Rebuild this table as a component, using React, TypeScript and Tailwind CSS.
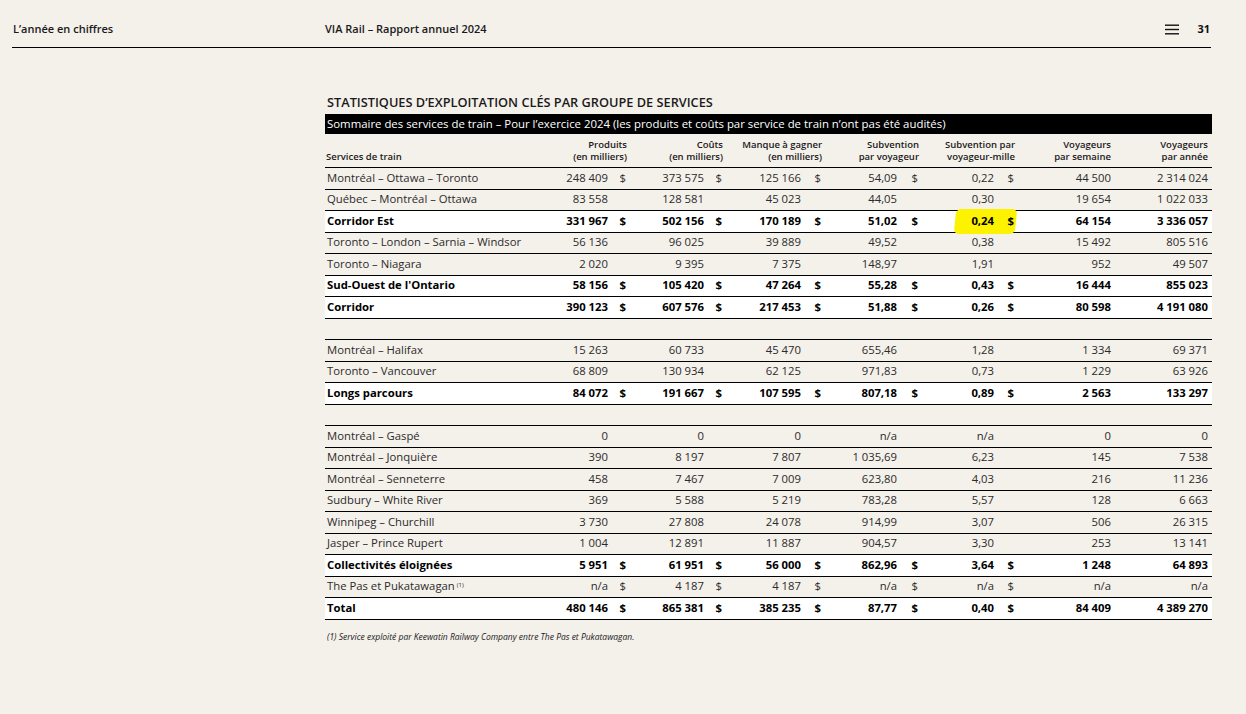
import React from 'react';

type Row = {
  label: string;
  v: string[]; // 7 values
  dollar?: boolean;
  bold?: boolean;
  note?: boolean;
  mark?: boolean;
};

const COLS =
  'grid grid-cols-[203px_80px_19px_77px_19px_78px_21px_75px_22px_75px_21px_96px_97px] pr-1';

const rows: (Row | 'gap')[] = [
  { label: 'Montréal – Ottawa – Toronto', v: ['248 409', '373 575', '125 166', '54,09', '0,22', '44 500', '2 314 024'], dollar: true },
  { label: 'Québec – Montréal – Ottawa', v: ['83 558', '128 581', '45 023', '44,05', '0,30', '19 654', '1 022 033'] },
  { label: 'Corridor Est', v: ['331 967', '502 156', '170 189', '51,02', '0,24', '64 154', '3 336 057'], dollar: true, bold: true, mark: true },
  { label: 'Toronto – London – Sarnia – Windsor', v: ['56 136', '96 025', '39 889', '49,52', '0,38', '15 492', '805 516'] },
  { label: 'Toronto – Niagara', v: ['2 020', '9 395', '7 375', '148,97', '1,91', '952', '49 507'] },
  { label: "Sud-Ouest de l'Ontario", v: ['58 156', '105 420', '47 264', '55,28', '0,43', '16 444', '855 023'], dollar: true, bold: true },
  { label: 'Corridor', v: ['390 123', '607 576', '217 453', '51,88', '0,26', '80 598', '4 191 080'], dollar: true, bold: true },
  'gap',
  { label: 'Montréal – Halifax', v: ['15 263', '60 733', '45 470', '655,46', '1,28', '1 334', '69 371'] },
  { label: 'Toronto – Vancouver', v: ['68 809', '130 934', '62 125', '971,83', '0,73', '1 229', '63 926'] },
  { label: 'Longs parcours', v: ['84 072', '191 667', '107 595', '807,18', '0,89', '2 563', '133 297'], dollar: true, bold: true },
  'gap',
  { label: 'Montréal – Gaspé', v: ['0', '0', '0', 'n/a', 'n/a', '0', '0'] },
  { label: 'Montréal – Jonquière', v: ['390', '8 197', '7 807', '1 035,69', '6,23', '145', '7 538'] },
  { label: 'Montréal – Senneterre', v: ['458', '7 467', '7 009', '623,80', '4,03', '216', '11 236'] },
  { label: 'Sudbury – White River', v: ['369', '5 588', '5 219', '783,28', '5,57', '128', '6 663'] },
  { label: 'Winnipeg – Churchill', v: ['3 730', '27 808', '24 078', '914,99', '3,07', '506', '26 315'] },
  { label: 'Jasper – Prince Rupert', v: ['1 004', '12 891', '11 887', '904,57', '3,30', '253', '13 141'] },
  { label: 'Collectivités éloignées', v: ['5 951', '61 951', '56 000', '862,96', '3,64', '1 248', '64 893'], dollar: true, bold: true },
  { label: 'The Pas et Pukatawagan', v: ['n/a', '4 187', '4 187', 'n/a', 'n/a', 'n/a', 'n/a'], dollar: true, note: true },
  { label: 'Total', v: ['480 146', '865 381', '385 235', '87,77', '0,40', '84 409', '4 389 270'], dollar: true, bold: true },
];

function DataRow({ r }: { r: Row }) {
  const tone = r.bold ? 'bg-white font-bold text-black' : 'text-[#2b2b2b]';
  const d = r.dollar ? '$' : '';
  return (
    <div className={`${COLS} h-[21.5px] items-center border-b border-black text-[11.3px] ${tone}`}>
      <div className="pl-[2px] whitespace-nowrap">
        {r.label}
        {r.note && <sup className="ml-[2px] text-[6px] font-normal">(1)</sup>}
      </div>
      <div className="text-right whitespace-nowrap">{r.v[0]}</div>
      <div className="text-right pr-[1px]">{d}</div>
      <div className="text-right whitespace-nowrap">{r.v[1]}</div>
      <div className="text-right pr-[1px]">{d}</div>
      <div className="text-right whitespace-nowrap">{r.v[2]}</div>
      <div className="text-right pr-[1px]">{d}</div>
      <div className="text-right whitespace-nowrap">{r.v[3]}</div>
      <div className="text-right pr-[1px]">{d}</div>
      <div className="relative col-span-2 flex h-full items-center">
        {r.mark && (
          <div className="absolute left-[36px] top-[-2px] h-[25px] w-[61px] -skew-x-6 rounded-[5px] bg-[#fdf200]" />
        )}
        <div className="relative w-[75px] text-right whitespace-nowrap">{r.v[4]}</div>
        <div className="relative w-[21px] pr-[1px] text-right">{d}</div>
      </div>
      <div className="text-right whitespace-nowrap">{r.v[5]}</div>
      <div className="text-right whitespace-nowrap">{r.v[6]}</div>
    </div>
  );
}

function Head({ a, b }: { a: string; b: string }) {
  return (
    <div className="col-span-2 text-right">
      <div>{a}</div>
      <div>{b}</div>
    </div>
  );
}

export default function App() {
  return (
    <div className="min-h-screen w-full bg-[#f4f0ea] font-['Open_Sans','Liberation_Sans',sans-serif] text-[#1a1a1a]">
      <div className="mx-[12px] w-[1199px]">
        {/* page header */}
        <div className="flex h-[48px] items-center border-b border-black pt-[11px] text-[11px] font-semibold">
          <div className="w-[313px] pl-[1px]">L’année en chiffres</div>
          <div className="flex-1">VIA Rail – Rapport annuel 2024</div>
          <svg width="14" height="11" viewBox="0 0 14 11" className="mr-[18px]">
            <rect x="0" y="0.5" width="14" height="1.4" fill="#111" />
            <rect x="0" y="4.8" width="14" height="1.4" fill="#111" />
            <rect x="0" y="9.1" width="14" height="1.4" fill="#111" />
          </svg>
          <div className="pr-[1px] font-bold text-[#111]">31</div>
        </div>

        <div className="ml-[313px] w-[887px]">
          <div className="mt-[47px] h-[15px] pl-[2px] text-[12.75px] font-semibold leading-[15px]">
            STATISTIQUES D’EXPLOITATION CLÉS PAR GROUPE DE SERVICES
          </div>
          <div className="mt-[4px] flex h-[20px] items-center bg-black pl-[2px] text-[11.4px] font-medium text-white">
            Sommaire des services de train – Pour l’exercice 2024 (les produits et coûts par service de train n’ont pas été audités)
          </div>

          <div className={`${COLS} h-[34px] items-end border-b border-black pb-[4px] text-[9.5px] font-semibold leading-[12px]`}>
            <div className="pl-[1px]">Services de train</div>
            <Head a="Produits" b="(en milliers)" />
            <Head a="Coûts" b="(en milliers)" />
            <Head a="Manque à gagner" b="(en milliers)" />
            <Head a="Subvention" b="par voyageur" />
            <Head a="Subvention par" b="voyageur-mille" />
            <div className="text-right">
              <div>Voyageurs</div>
              <div>par semaine</div>
            </div>
            <div className="text-right">
              <div>Voyageurs</div>
              <div>par année</div>
            </div>
          </div>

          {rows.map((r, i) =>
            r === 'gap' ? (
              <div key={i} className="h-[21.5px] border-b border-black" />
            ) : (
              <DataRow key={i} r={r} />
            )
          )}

          <div className="mt-[11px] pl-[2px] text-[8.5px] italic">
            (1) Service exploité par Keewatin Railway Company entre The Pas et Pukatawagan.
          </div>
        </div>
      </div>
    </div>
  );
}
